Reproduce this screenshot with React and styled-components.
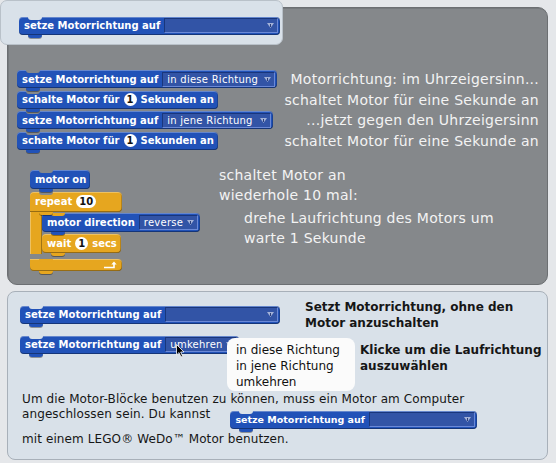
import React from 'react';
import styled, { createGlobalStyle } from 'styled-components';

const BLUE = '#2152b8';
const ORANGE = '#e6a61f';
const GREY = '#85888b';
const PALE = '#d9e1e9';

const GlobalStyle = createGlobalStyle`
  body {
    margin: 0;
    background: #e5e7ea;
  }
`;

const Page = styled.div`
  position: relative;
  width: 556px;
  height: 463px;
  padding: 7px 0 0 7px;
  box-sizing: border-box;
  font-family: 'DejaVu Sans', Verdana, sans-serif;
`;

const Callout = styled.div`
  position: absolute;
  left: 0;
  top: 0;
  z-index: 5;
  width: 283px;
  height: 45px;
  box-sizing: border-box;
  padding: 13px 0 0 18px;
  background: ${PALE};
  border: 1px solid #b9c1c9;
  border-radius: 7px;
`;

const Board = styled.section`
  width: 541px;
  height: 278px;
  box-sizing: border-box;
  padding: 61px 8px 0 9px;
  background: ${GREY};
  border: 1px solid #6c6f72;
  border-radius: 10px;
  box-shadow: inset 1px 1px 0 #76797c;
`;

const Line = styled.div`
  display: flex;
  align-items: center;
  justify-content: space-between;
  height: 20.5px;
`;

const Caption = styled.div`
  color: #f3f3f3;
  font-size: 14px;
  line-height: ${p => p.$lh || 20}px;
  letter-spacing: 0.25px;
  white-space: nowrap;
  margin-top: ${p => p.$mt || 0}px;
  padding-left: ${p => p.$indent || 0}px;
`;

const Block = styled.div`
  position: relative;
  display: inline-flex;
  align-items: center;
  gap: 4px;
  height: ${p => p.$h || 18}px;
  padding: 0 ${p => (p.$pr === undefined ? 4 : p.$pr)}px 0 5px;
  box-sizing: border-box;
  background: ${p => p.$c || BLUE};
  border-radius: 4px;
  color: #fff;
  font-size: 10px;
  font-weight: bold;
  white-space: nowrap;
  box-shadow: inset 0 1px 0 rgba(255, 255, 255, 0.3),
    inset 0 -1px 0 rgba(0, 0, 0, 0.35), inset -1px 0 0 rgba(0, 0, 0, 0.2);

  &::before {
    content: '';
    position: absolute;
    left: 9px;
    top: 0;
    z-index: 1;
    width: 14px;
    height: 3px;
    background: ${p => p.$notch || GREY};
    border-radius: 0 0 3px 3px;
  }

  &::after {
    content: '';
    position: absolute;
    left: 9px;
    bottom: -3px;
    z-index: 2;
    width: 14px;
    height: 3px;
    background: ${p => p.$c || BLUE};
    border-radius: 0 0 3px 3px;
    box-shadow: 0 1px 0 rgba(0, 0, 0, 0.35);
  }
`;

const Drop = styled.span`
  display: inline-flex;
  align-items: center;
  width: ${p => p.$w}px;
  height: 15px;
  box-sizing: border-box;
  padding: 0 3px 0 4px;
  background: #3254a6;
  border: 1px solid;
  border-color: #19367c #6a88d6 #6a88d6 #19367c;
  font-weight: normal;
  letter-spacing: 0.25px;
`;

const DropArrow = styled.svg`
  margin-left: auto;
  flex-shrink: 0;
`;

const Num = styled.span`
  display: inline-flex;
  align-items: center;
  justify-content: center;
  min-width: 13px;
  height: 13px;
  padding: 0 3px;
  box-sizing: border-box;
  border-radius: 7px;
  background: #fff;
  color: #111;
`;

const Script = styled.div`
  display: flex;
  align-items: flex-start;
  margin-top: 19px;
`;

const Stack = styled.div`
  width: 189px;
  margin-left: 13px;
  flex-shrink: 0;
  display: flex;
  flex-direction: column;
  align-items: flex-start;
  gap: 1px;
`;

const Notes = styled.div`
  margin-top: -4px;
`;

const CBody = styled.div`
  display: flex;
  align-self: stretch;
`;

const CArm = styled.div`
  width: 12px;
  background: ${ORANGE};
  box-shadow: inset 1px 0 0 rgba(255, 255, 255, 0.3),
    inset -1px 0 0 rgba(0, 0, 0, 0.3);
`;

const CInner = styled.div`
  display: flex;
  flex-direction: column;
  align-items: flex-start;
  gap: 2px;
  padding: 1px 0;
`;

const CHead = styled(Block)`
  width: 92px;
  height: 20px;
  border-radius: 4px 4px 4px 0;
`;

const CFoot = styled(Block)`
  width: 92px;
  height: 12px;
  justify-content: flex-end;
  border-radius: 0 4px 4px 4px;
`;

const Help = styled.section`
  margin-top: 6px;
  width: 541px;
  height: 169px;
  box-sizing: border-box;
  padding: 11px 0 0 12px;
  background: ${PALE};
  border: 1px solid #a8b0b9;
  border-radius: 8px;
  color: #161616;
`;

const HelpRow = styled.div`
  position: relative;
  display: flex;
  align-items: flex-start;
  margin-bottom: ${p => p.$mb || 0}px;
`;

const Slot = styled.div`
  width: ${p => p.$w}px;
  flex-shrink: 0;
`;

const Note = styled.p`
  margin: ${p => p.$mt}px 0 0;
  font-size: 12px;
  font-weight: bold;
  line-height: 16px;
  white-space: nowrap;
`;

const Menu = styled.div`
  position: absolute;
  left: 207px;
  top: 5px;
  z-index: 4;
  width: 128px;
  height: 53px;
  box-sizing: border-box;
  padding: 4px 0 0 9px;
  background: #fbfbfb;
  border-radius: 8px;
  font-size: 12px;
  line-height: 16px;
  color: #111;
`;

const Pointer = styled.svg`
  position: absolute;
  left: 156px;
  top: 11px;
  z-index: 3;
`;

const Para = styled.p`
  margin: 18px 0 0 2px;
  font-size: 12px;
  line-height: 15px;
  letter-spacing: 0.1px;
`;

const InlineBlock = styled(Block)`
  vertical-align: -5px;
  margin: 0 0 3px 20px;
  font-size: 9.5px;
  letter-spacing: 0;
`;

const Arrow = () => (
  <DropArrow width="7" height="5" viewBox="0 0 7 5">
    <path d="M0 0h7L3.5 5z" fill="#a3b2d8" />
    <path d="M3.5 1v3" stroke="#2a3f7a" strokeWidth="1" />
  </DropArrow>
);

const LoopArrow = () => (
  <svg width="14" height="8" viewBox="0 0 14 8">
    <path d="M0 6.5H10V3" stroke="#fff" strokeWidth="1.6" fill="none" />
    <path d="M7.3 3.4L10 0.4 12.7 3.4z" fill="#fff" />
  </svg>
);

const SetDirection = ({ value = '', w, notch, pr = 2 }) => (
  <Block $notch={notch} $pr={pr}>
    setze Motorrichtung auf
    <Drop $w={w}>
      {value}
      <Arrow />
    </Drop>
  </Block>
);

const RunFor = () => (
  <Block>
    schalte Motor für <Num>1</Num> Sekunden an
  </Block>
);

export default function App() {
  return (
    <Page>
      <GlobalStyle />
      <Callout>
        <SetDirection w={114} notch={PALE} />
      </Callout>

      <Board>
        <Line>
          <SetDirection value="in diese Richtung" w={113} />
          <Caption>Motorrichtung: im Uhrzeigersinn...</Caption>
        </Line>
        <Line>
          <RunFor />
          <Caption>schaltet Motor für eine Sekunde an</Caption>
        </Line>
        <Line>
          <SetDirection value="in jene Richtung" w={109} />
          <Caption>...jetzt gegen den Uhrzeigersinn</Caption>
        </Line>
        <Line>
          <RunFor />
          <Caption>schaltet Motor für eine Sekunde an</Caption>
        </Line>

        <Script>
          <Stack>
            <Block $h={19}>motor on</Block>
            <div>
              <CHead $c={ORANGE}>
                repeat <Num>10</Num>
              </CHead>
              <CBody>
                <CArm />
                <CInner>
                  <Block $h={19} $pr={2} $notch={ORANGE}>
                    motor direction
                    <Drop $w={59}>
                      reverse
                      <Arrow />
                    </Drop>
                  </Block>
                  <Block $h={19} $c={ORANGE} $notch={ORANGE}>
                    wait <Num>1</Num> secs
                  </Block>
                </CInner>
              </CBody>
              <CFoot $c={ORANGE} $notch={ORANGE}>
                <LoopArrow />
              </CFoot>
            </div>
          </Stack>
          <Notes>
            <Caption $lh={19.5}>schaltet Motor an</Caption>
            <Caption $lh={19.5}>wiederhole 10 mal:</Caption>
            <Caption $indent={25} $mt={3}>drehe Laufrichtung des Motors um</Caption>
            <Caption $indent={25} $lh={21}>warte 1 Sekunde</Caption>
          </Notes>
        </Script>
      </Board>

      <Help>
        <HelpRow $mb={2}>
          <Slot $w={285}>
            <SetDirection w={113} notch={PALE} />
          </Slot>
          <Note $mt={-4}>
            Setzt Motorrichtung, ohne den
            <br />
            Motor anzuschalten
          </Note>
        </HelpRow>
        <HelpRow>
          <Slot $w={340}>
            <SetDirection value="umkehren" w={72} notch={PALE} />
          </Slot>
          <Pointer width="9" height="14" viewBox="0 0 9 14">
            <path d="M0.5 0.5V11L3 8.6 5 13 6.6 12.2 4.7 8H8z" fill="#000" stroke="#fff" strokeWidth="0.8" />
          </Pointer>
          <Menu>
            in diese Richtung
            <br />
            in jene Richtung
            <br />
            umkehren
          </Menu>
          <Note $mt={9}>
            Klicke um die Laufrichtung
            <br />
            auszuwählen
          </Note>
        </HelpRow>
        <Para>
          Um die Motor-Blöcke benutzen zu können, muss ein Motor am Computer
          <br />
          angeschlossen sein. Du kannst
          <InlineBlock $notch={PALE} $pr={2}>
            setze Motorrichtung auf
            <Drop $w={106}>
              <Arrow />
            </Drop>
          </InlineBlock>
          <br />
          mit einem LEGO® WeDo™ Motor benutzen.
        </Para>
      </Help>
    </Page>
  );
}
